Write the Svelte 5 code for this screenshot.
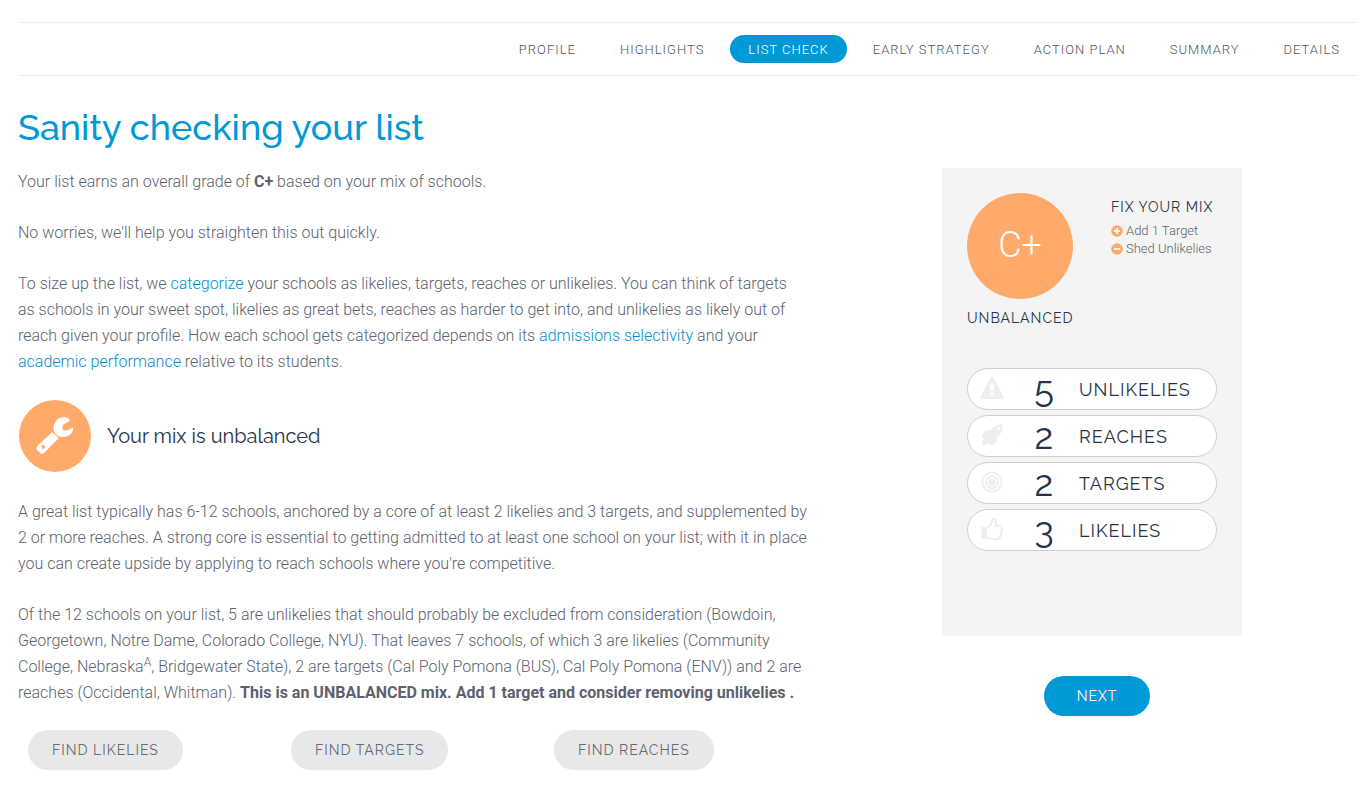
<script>
  const tabs = ['Profile', 'Highlights', 'List Check', 'Early Strategy', 'Action Plan', 'Summary', 'Details']
  const finders = ['Likelies', 'Targets', 'Reaches']
  const mix = [
    { icon: 'warning', count: 5, label: 'Unlikelies' },
    { icon: 'rocket', count: 2, label: 'Reaches' },
    { icon: 'target', count: 2, label: 'Targets' },
    { icon: 'thumb', count: 3, label: 'Likelies' },
  ]

  let current = $state('List Check')
</script>

<div class="page">
  <nav class="tabs">
    {#each tabs as tab}
      <a
        class="tab"
        class:active={tab === current}
        href="#top"
        aria-current={tab === current ? 'page' : undefined}
        onclick={(e) => {
          e.preventDefault()
          current = tab
        }}>{tab}</a>
    {/each}
  </nav>

  <h1>Sanity checking your list</h1>

  <div class="columns">
    <main>
      <p>Your list earns an overall grade of <strong>C+</strong> based on your mix of schools.</p>
      <p>No worries, we'll help you straighten this out quickly.</p>
      <p>
        To size up the list, we <a href="#categorize">categorize</a> your schools as likelies, targets, reaches or
        unlikelies. You can think of targets as schools in your sweet spot, likelies as great bets, reaches as harder to
        get into, and unlikelies as likely out of reach given your profile. How each school gets categorized depends on
        its <a href="#selectivity">admissions selectivity</a> and your
        <a href="#performance">academic performance</a> relative to its students.
      </p>

      <div class="verdict">
        <span class="badge">
          <svg viewBox="0 0 38 38" width="38" height="38" aria-hidden="true">
            <path
              fill="#fff"
              d="M33.2 5.2 27.5 8.4 26.2 10.4 27.1 14.2 30.3 14.8 37 11.5C37.8 16.5 33.5 20.8 27.8 21.1 23.5 21.3 19.7 19.2 18.1 15.2 16.2 10.2 19.3 3.3 24.3 1.7 27.5.7 30.7 1.1 32.6 2.6 33.7 3.5 33.8 4.8 33.2 5.2Z"
            />
            <path
              fill="#fff"
              fill-rule="evenodd"
              d="M16.2 15.9 22.7 22.2 8.2 36.8C7 38 5.3 38.1 4 36.9L1.2 34.2C0 33 .1 31.1 1.3 29.9ZM7.2 29.1a1.8 1.8 0 1 0 0 3.6 1.8 1.8 0 0 0 0-3.6Z"
            />
          </svg>
        </span>
        <h2>Your mix is unbalanced</h2>
      </div>

      <p>
        A great list typically has 6-12 schools, anchored by a core of at least 2 likelies and 3 targets, and
        supplemented by 2 or more reaches. A strong core is essential to getting admitted to at least one school on your
        list; with it in place you can create upside by applying to reach schools where you're competitive.
      </p>
      <p>
        Of the 12 schools on your list, 5 are unlikelies that should probably be excluded from consideration (Bowdoin,
        Georgetown, Notre Dame, Colorado College, NYU). That leaves 7 schools, of which 3 are likelies (Community
        College, Nebraska<sup>A</sup>, Bridgewater State), 2 are targets (Cal Poly Pomona (BUS), Cal Poly Pomona (ENV))
        and 2 are reaches (Occidental, Whitman).
        <strong>This is an UNBALANCED mix. Add 1 target and consider removing unlikelies .</strong>
      </p>

      <div class="finders">
        {#each finders as name}
          <div class="finder"><button class="btn" type="button">Find {name}</button></div>
        {/each}
      </div>
    </main>

    <aside>
      <section class="card">
        <div class="summary">
          <div class="grade">
            <div class="circle">C+</div>
            <div class="caption">Unbalanced</div>
          </div>
          <div class="fix">
            <h3>Fix your mix</h3>
            <ul>
              <li>
                <svg viewBox="0 0 12 12" width="12" height="12" aria-hidden="true">
                  <circle cx="6" cy="6" r="5.8" fill="#ffa96a" />
                  <path d="M6 3v6M3 6h6" stroke="#fff" stroke-width="1.8" />
                </svg>
                Add 1 Target
              </li>
              <li>
                <svg viewBox="0 0 12 12" width="12" height="12" aria-hidden="true">
                  <circle cx="6" cy="6" r="5.8" fill="#ffa96a" />
                  <path d="M3 6h6" stroke="#fff" stroke-width="1.8" />
                </svg>
                Shed Unlikelies
              </li>
            </ul>
          </div>
        </div>

        <div class="mix">
          {#each mix as row}
            <div class="row">
              <svg class="icon" viewBox="0 0 24 24" width="24" height="24" aria-hidden="true">
                {#if row.icon === 'warning'}
                  <path
                    fill-rule="evenodd"
                    d="M10.6 1.4Q12-.6 13.4 1.4L23.6 20.4Q24.6 23 22.2 23H1.8Q-.6 23 .4 20.4ZM10.2 7.4 10.5 14.6h3L13.8 7.4ZM10.4 16.5v3.2h3.2v-3.2Z"
                  />
                {:else if row.icon === 'rocket'}
                  <path
                    fill-rule="evenodd"
                    d="M22.7 1.4C23.1 7.3 20.7 11.6 16.8 15L16.5 19.3Q16.5 19.8 16 20.1L11.3 22.8 10.2 21.9 11.2 17.9 6.8 13.5 2.7 14.4 1.7 13.3 4.5 8.5Q4.8 8.1 5.3 8.1L9.4 7.8C13 3.7 17.1 1.1 22.7 1.4ZM18.5 4a1.6 1.6 0 1 0 0 3.2 1.6 1.6 0 0 0 0-3.2Z"
                  />
                  <path d="M6.4 13.2 11.4 18.3C9.8 21.3 5.3 22 2.4 22.1 2.4 19.3 3.2 15 6.4 13.2Z" />
                {:else if row.icon === 'target'}
                  <circle class="line" cx="12" cy="12" r="9.6" />
                  <circle class="line" cx="12" cy="12" r="5.9" />
                  <circle cx="12" cy="12" r="3.6" />
                {:else}
                  <path d="M1.5 10h5.3v12H3Q1.5 22 1.5 20.4Z" />
                  <path
                    class="line"
                    d="M7 11.2C9.8 9.4 11 7.5 11.7 5.3L12.3 2.6Q12.6 1.6 13.8 1.8C16.6 2.2 16.8 5 15.6 8.8H20C22.6 9 22.6 11.5 21.4 12.5 22.3 13.8 21.8 15.4 20.8 16 21.4 17.5 20.8 18.8 19.8 19.3 20 21.8 18.4 22.5 16.5 22.5 12.6 22.6 10.2 21 7 20.5"
                  />
                {/if}
              </svg>
              <span class="count">{row.count}</span>
              <span class="label">{row.label}</span>
            </div>
          {/each}
        </div>
      </section>
      <button class="btn next" type="button">Next</button>
    </aside>
  </div>
</div>

<style>
  :global(body) {
    margin: 0;
    background: #fff;
  }

  .page {
    padding: 22px 11px 18px 18px;
    color: #5c626e;
    font-family: Roboto, 'Liberation Sans', sans-serif;
    font-size: 16px;
    font-weight: 300;
    line-height: 26px;
  }

  a {
    color: #0090d0;
    text-decoration: none;
  }

  h1,
  h2,
  h3 {
    margin: 0;
    font-family: Raleway, Lato, sans-serif;
    font-weight: 400;
  }

  .tabs {
    display: flex;
    justify-content: flex-end;
    gap: 8px;
    padding: 12px 0;
    border-top: 1px solid #ececec;
    border-bottom: 1px solid #ececec;
  }

  .tab {
    box-sizing: border-box;
    height: 28px;
    padding: 1px 18px 0;
    border-radius: 14px;
    color: #50545d;
    font-size: 13px;
    letter-spacing: 1px;
    line-height: 28px;
    text-transform: uppercase;
  }

  .tab.active {
    background: #0099d8;
    color: #fff;
  }

  h1 {
    margin: 27px 0 17px;
    color: #0099d8;
    font-size: 36px;
    font-weight: 500;
    line-height: 48px;
  }

  .columns {
    display: grid;
    grid-template-columns: 3fr 2fr;
  }

  main {
    padding: 1px 15px 0 0;
  }

  p {
    margin: 0 0 25px;
  }

  strong {
    font-weight: 700;
  }

  sup {
    font-size: 12px;
    line-height: 0;
  }

  .verdict {
    display: flex;
    align-items: center;
    gap: 16px;
    margin: 0 0 27px 1px;
  }

  .badge {
    display: flex;
    align-items: center;
    justify-content: center;
    box-sizing: border-box;
    width: 72px;
    height: 72px;
    padding-bottom: 3px;
    border-radius: 50%;
    background: #ffa96a;
  }

  h2 {
    color: #263248;
    font-size: 20px;
  }

  .finders {
    display: grid;
    grid-template-columns: repeat(3, 1fr);
    margin-top: -1px;
  }

  .finder {
    padding-left: 10px;
  }

  .btn {
    height: 40px;
    padding: 0 24px;
    border: 0;
    border-radius: 20px;
    background: #e8e8e8;
    color: #646a76;
    font-family: Raleway, Lato, sans-serif;
    font-size: 14px;
    letter-spacing: 1px;
    text-transform: uppercase;
    vertical-align: top;
    cursor: pointer;
  }

  .btn.next {
    margin: 40px 0 0 10px;
    padding: 0 33px;
    background: #0099d8;
    color: #fff;
  }

  aside {
    display: flex;
    flex-direction: column;
    align-items: center;
    padding-left: 4px;
  }

  .card {
    box-sizing: border-box;
    width: 300px;
    padding: 25px 25px 85px;
    background: #f4f4f4;
  }

  .summary {
    display: flex;
    justify-content: space-between;
  }

  .circle {
    width: 106px;
    height: 106px;
    border-radius: 50%;
    background: #ffa96a;
    color: #fff;
    font-size: 36px;
    line-height: 104px;
    text-align: center;
  }

  .caption {
    margin-top: 6px;
    color: #263248;
    font-family: Raleway, Lato, sans-serif;
    font-size: 14px;
    font-weight: 400;
    letter-spacing: 1px;
    text-transform: uppercase;
  }

  h3 {
    color: #263248;
    font-size: 14px;
    letter-spacing: 1px;
    text-transform: uppercase;
    white-space: nowrap;
  }

  .fix {
    width: 106px;
    padding-top: 1px;
  }

  ul {
    margin: 2px 0 0;
    padding: 0;
    list-style: none;
  }

  li {
    display: flex;
    align-items: center;
    gap: 3px;
    font-size: 13px;
    line-height: 18px;
    white-space: nowrap;
  }

  .mix {
    display: grid;
    gap: 5px;
    margin-top: 37px;
  }

  .row {
    display: grid;
    grid-template-columns: 24px 51px 1fr;
    align-items: center;
    column-gap: 12px;
    box-sizing: border-box;
    height: 42px;
    padding: 2px 8px 0 12px;
    border: 1px solid #d0d0d0;
    border-radius: 21px;
    background: #fff;
    color: #263248;
    font-family: Raleway, Lato, sans-serif;
    font-weight: 400;
  }

  .icon {
    margin-bottom: 4px;
    fill: #eee;
  }

  .line {
    fill: none;
    stroke: #eee;
    stroke-width: 2;
  }

  .count {
    padding: 0 0 2px 5px;
    font-size: 36px;
    text-align: center;
  }

  .label {
    font-size: 18px;
    letter-spacing: 1px;
    text-transform: uppercase;
  }
</style>
